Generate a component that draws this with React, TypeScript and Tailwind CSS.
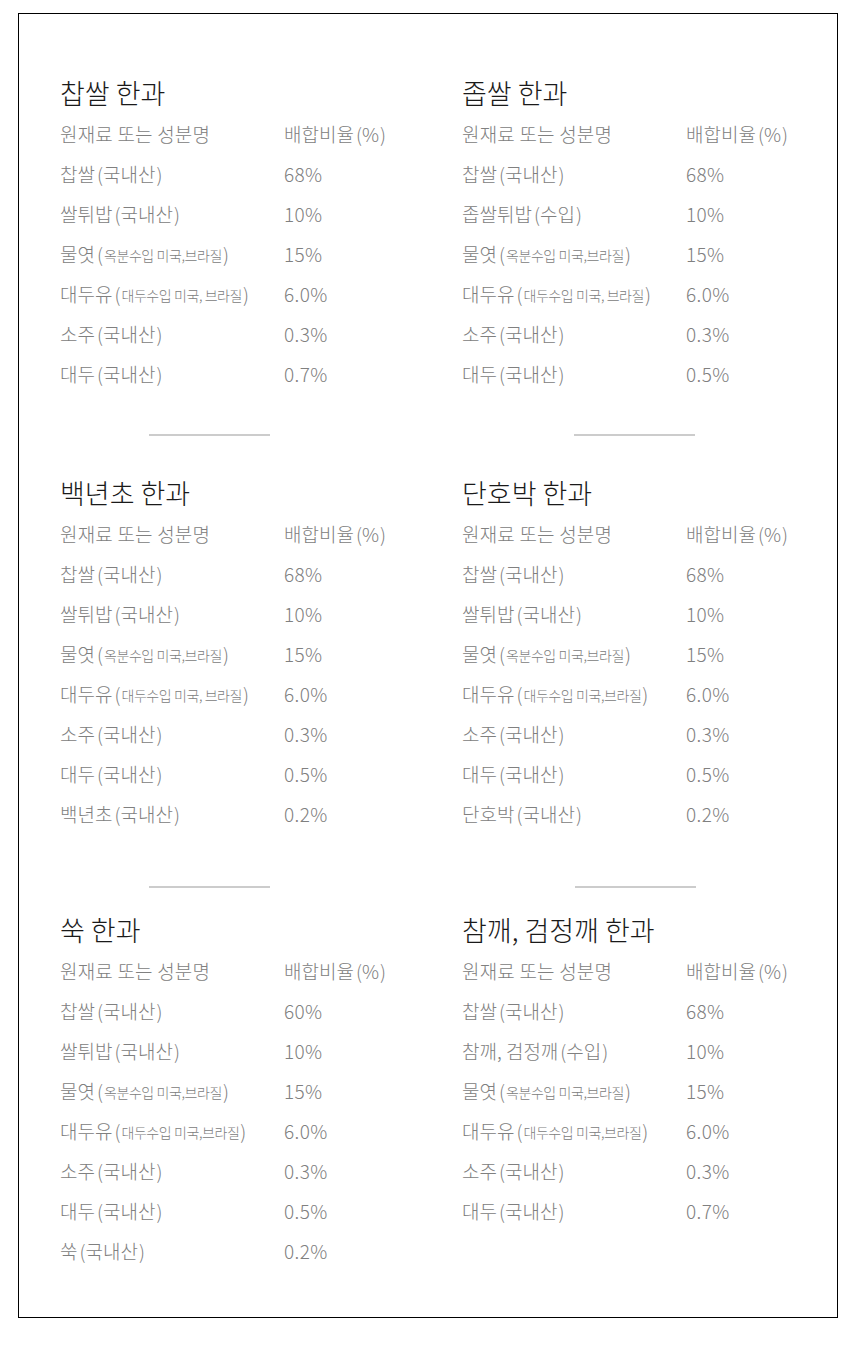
import React from "react";

type Row = { name: React.ReactNode; value: string };
type Section = { title: string; rows: Row[] };

const small = (t: string) => (
  <>
    <span className="ml-[2px]">(</span>
    <span className="text-[14px] tracking-[-0.03em] align-[1px] mx-[1px]">{t}</span>)
  </>
);

const paren = (a: string, b: string) => (
  <>
    {a}
    <span className="ml-[2px]">(</span>
    {b}
    <span className="ml-[1px]">)</span>
  </>
);

const mulyeot: Row = { name: <>물엿{small("옥분수입 미국,브라질")}</>, value: "15%" };
const daeduyu: Row = { name: <>대두유{small("대두수입 미국, 브라질")}</>, value: "6.0%" };
const daeduyu2: Row = { name: <>대두유{small("대두수입 미국,브라질")}</>, value: "6.0%" };

const bands: Section[][] = [
  [
    {
      title: "찹쌀 한과",
      rows: [
        { name: paren("찹쌀", "국내산"), value: "68%" },
        { name: paren("쌀튀밥", "국내산"), value: "10%" },
        mulyeot,
        daeduyu,
        { name: paren("소주", "국내산"), value: "0.3%" },
        { name: paren("대두", "국내산"), value: "0.7%" },
      ],
    },
    {
      title: "좁쌀 한과",
      rows: [
        { name: paren("찹쌀", "국내산"), value: "68%" },
        { name: paren("좁쌀튀밥", "수입"), value: "10%" },
        mulyeot,
        daeduyu,
        { name: paren("소주", "국내산"), value: "0.3%" },
        { name: paren("대두", "국내산"), value: "0.5%" },
      ],
    },
  ],
  [
    {
      title: "백년초 한과",
      rows: [
        { name: paren("찹쌀", "국내산"), value: "68%" },
        { name: paren("쌀튀밥", "국내산"), value: "10%" },
        mulyeot,
        daeduyu,
        { name: paren("소주", "국내산"), value: "0.3%" },
        { name: paren("대두", "국내산"), value: "0.5%" },
        { name: paren("백년초", "국내산"), value: "0.2%" },
      ],
    },
    {
      title: "단호박 한과",
      rows: [
        { name: paren("찹쌀", "국내산"), value: "68%" },
        { name: paren("쌀튀밥", "국내산"), value: "10%" },
        mulyeot,
        daeduyu2,
        { name: paren("소주", "국내산"), value: "0.3%" },
        { name: paren("대두", "국내산"), value: "0.5%" },
        { name: paren("단호박", "국내산"), value: "0.2%" },
      ],
    },
  ],
  [
    {
      title: "쑥 한과",
      rows: [
        { name: paren("찹쌀", "국내산"), value: "60%" },
        { name: paren("쌀튀밥", "국내산"), value: "10%" },
        mulyeot,
        daeduyu2,
        { name: paren("소주", "국내산"), value: "0.3%" },
        { name: paren("대두", "국내산"), value: "0.5%" },
        { name: paren("쑥", "국내산"), value: "0.2%" },
      ],
    },
    {
      title: "참깨, 검정깨 한과",
      rows: [
        { name: paren("찹쌀", "국내산"), value: "68%" },
        { name: paren("참깨, 검정깨", "수입"), value: "10%" },
        mulyeot,
        daeduyu2,
        { name: paren("소주", "국내산"), value: "0.3%" },
        { name: paren("대두", "국내산"), value: "0.7%" },
      ],
    },
  ],
];

function SectionBlock({ s }: { s: Section }) {
  return (
    <div className="flex flex-col">
      <div className="h-[42px] flex items-center text-[27px] font-light text-[#1a1a1a]">{s.title}</div>
      <div className="flex flex-col text-[19px] font-light text-[#808080]">
        <div className="h-[40px] flex items-center">
          <div className="w-[224px] whitespace-nowrap tracking-[0.01em]">원재료 또는 성분명</div>
          <div>{paren("배합비율", "%")}</div>
        </div>
        {s.rows.map((r, i) => (
          <div key={i} className="h-[40px] flex items-center">
            <div className="w-[224px] whitespace-nowrap">{r.name}</div>
            <div className="tracking-[0.02em]">{r.value}</div>
          </div>
        ))}
      </div>
    </div>
  );
}

function Divider({ className, right }: { className: string; right: string }) {
  return (
    <div className={"grid grid-cols-[402px_402px] " + className}>
      <div className="pl-[89px]">
        <div className="w-[121px] h-[2px] bg-[#cccccc]" />
      </div>
      <div className={right}>
        <div className="w-[121px] h-[2px] bg-[#cccccc]" />
      </div>
    </div>
  );
}

export default function App() {
  return (
    <div
      className="w-[860px] min-h-[1349px] bg-white pt-[13px] pl-[18px]"
      style={{ fontFamily: '"Noto Sans CJK KR", "Noto Sans", sans-serif' }}
    >
      <div className="w-[820px] border border-black pt-[58px] pb-[46px] pl-[41px]">
        <div className="grid grid-cols-[402px_402px]">
          <SectionBlock s={bands[0][0]} />
          <SectionBlock s={bands[0][1]} />
        </div>
        <Divider className="mt-[40px] mb-[36px]" right="pl-[112px]" />
        <div className="grid grid-cols-[402px_402px]">
          <SectionBlock s={bands[1][0]} />
          <SectionBlock s={bands[1][1]} />
        </div>
        <Divider className="mt-[52px] mb-[21px]" right="pl-[113px]" />
        <div className="grid grid-cols-[402px_402px]">
          <SectionBlock s={bands[2][0]} />
          <SectionBlock s={bands[2][1]} />
        </div>
      </div>
    </div>
  );
}
